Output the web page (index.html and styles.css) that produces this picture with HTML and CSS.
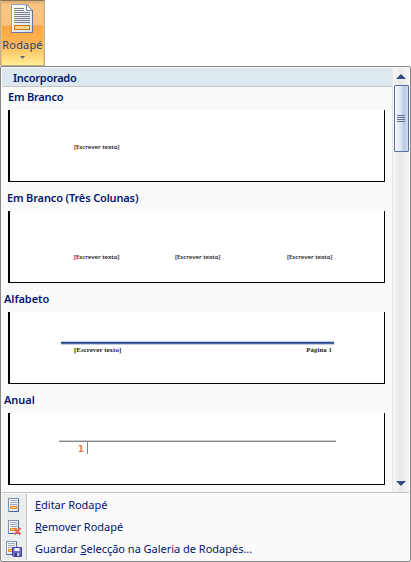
FILE: index.html
```html
<!DOCTYPE html>
<html lang="pt">
<head>
<meta charset="utf-8">
<title>Rodapé</title>
<link rel="stylesheet" href="styles.css">
</head>
<body>
<svg width="0" height="0" class="defs" aria-hidden="true">
  <defs>
    <linearGradient id="sheet" x2="1" y2="1"><stop stop-color="#fff"/><stop offset="1" stop-color="#d3e1f2"/></linearGradient>
    <g id="page">
      <rect x=".5" y=".5" width="10" height="13" fill="url(#sheet)" stroke="#8293b0"/>
      <path d="M10.500 1v12.500H1" fill="none" stroke="#53678c"/>
      <path d="M2 2.500h7M2 4.500h7M2 6.500h7" stroke="#a4adbd"/>
      <rect x="2.500" y="8.500" width="6" height="2" fill="#ffd27d" stroke="#e48a22"/>
    </g>
  </defs>
</svg>
<button class="ribbon-button">
  <svg width="23" height="30" viewBox="0 0 23 30">
    <path d="M.5.5h15l6 6v22H.5z" fill="url(#sheet)" stroke="#8ba0c2"/>
    <path d="M15.500.5v6h6z" fill="#fff" stroke="#7185a8"/>
    <path d="M21.500 6v22.500H.5" fill="none" stroke="#5f779f"/>
    <path d="M3 4.500h10M3 6.500h10M3 8.500h16M3 10.500h16M3 12.500h16M3 14.500h16M3 16.500h16M3 18.500h16" stroke="#7c7f84"/>
    <rect x="3.500" y="21.500" width="15" height="4" fill="#ffd58b" stroke="#c8761b"/>
  </svg>
  <span class="button-label">Rodapé</span>
  <svg class="caret" width="5" height="3"><path d="M0 0h5L2.500 3z" fill="#4c699f"/></svg>
</button>
<main class="menu">
  <div class="gallery">
    <div class="gallery-content">
      <h1>Incorporado</h1>
      <section class="item blank">
        <h2>Em Branco</h2>
        <div class="preview"><span>[Escrever texto]</span></div>
      </section>
      <section class="item columns">
        <h2>Em Branco (Três Colunas)</h2>
        <div class="preview"><span>[Escrever texto]</span><span>[Escrever texto]</span><span>[Escrever texto]</span></div>
      </section>
      <section class="item alphabet">
        <h2>Alfabeto</h2>
        <div class="preview"><div class="rule"></div><div class="words"><span class="entry">[Escrever texto]</span><span class="folio">Página 1</span></div></div>
      </section>
      <section class="item annual">
        <h2>Anual</h2>
        <div class="preview"><div class="rule"></div><div class="number">1</div></div>
      </section>
    </div>
    <div class="scrollbar">
      <svg class="up" width="10" height="5"><path d="M0 5L5 0l5 5z" fill="#354a7e"/></svg>
      <div class="thumb"><i></i><i></i><i></i><i></i></div>
      <svg class="down" width="10" height="5"><path d="M0 0h10L5 5z" fill="#354a7e"/></svg>
    </div>
  </div>
  <nav class="commands">
    <a><span class="icon"><svg width="18" height="17"><use href="#page" x="3" y="1"/></svg></span><span class="edit"><u>E</u>ditar Rodapé</span></a>
    <a><span class="icon"><svg width="18" height="17"><use href="#page" x="3" y="1"/><path d="M9.500 9.500l6 6M15.500 9l-6 6.500" stroke="#f0654b" stroke-width="2"/></svg></span><span class="remove"><u>R</u>emover Rodapé</span></a>
    <a><span class="icon"><svg width="18" height="17"><use href="#page" x="1" y="0"/><path d="M7.500 6.500h9v9h-8l-1-1z" fill="#6868c8" stroke="#4545a0"/><path d="M9.500 7h5v3h-5z" fill="#eef2ff"/><path d="M10 12h4v3h-4z" fill="#c5cdf0"/><path d="M10 12h2v3h-2z" fill="#353575"/></svg></span><span class="save">Guardar <u>S</u>elecção na Galeria de Rodapés...</span></a>
  </nav>
</main>
</body>
</html>
```
FILE: styles.css
```css
* { box-sizing: border-box; }
body {
  margin: 0;
  width: 411px;
  height: 562px;
  overflow: hidden;
  background: #fff;
  color: #00156e;
  font: 11px/14px "Noto Sans", "Open Sans", sans-serif;
}
.defs { position: absolute; }
.ribbon-button {
  display: flex;
  flex-direction: column;
  align-items: center;
  width: 45px;
  height: 66px;
  padding: 3px 0 0;
  border: 1px solid #c2b08c;
  border-top: 1px solid #8d7656;
  background: linear-gradient(#dcaa72 0, #fbc583 4px, #fdc080 24px, #fda53f 25px, #fdb552 42px, #ffec92 63px);
  box-shadow: inset 1px 0 #edc073, inset -1px 0 #edc073;
  color: #244079;
  font: inherit;
}
.ribbon-button svg { flex: none; }
.button-label { height: 14px; margin-top: 4px; letter-spacing: .15px; white-space: nowrap; }
.ribbon-button .caret { margin-top: 4px; }
.menu {
  width: 411px;
  height: 496px;
  padding: 1px;
  border: 1px solid #868686;
  border-radius: 2px;
  background: #fafafa;
}
.gallery { display: flex; height: 425px; border-bottom: 1px solid #c5c5c5; }
.gallery-content { width: 390px; }
h1, h2 { margin: 0; font-size: 11px; font-weight: 600; white-space: nowrap; }
h1 { height: 19px; padding: 3px 0 0 11px; border-bottom: 1px solid #c5c5c5; background: #dde7ee; letter-spacing: -.28px; }
.item { height: 101px; }
h2 { height: 23px; padding: 2px 0 0 6px; line-height: 15px; letter-spacing: -.2px; }
.columns h2 { padding-left: 5px; letter-spacing: -.15px; }
.alphabet h2, .annual h2 { padding-left: 2px; letter-spacing: -.05px; }
.preview {
  width: 377px;
  height: 72px;
  margin-left: 6px;
  border: solid #000;
  border-width: 0 1px 1px 2px;
  background: #fff;
  color: #222;
  font: 600 6px/8px "Noto Sans", sans-serif;
  white-space: nowrap;
}
.preview span { display: block; }
.blank .preview { padding: 33px 0 0 64px; }
.columns .preview { display: grid; grid-template-columns: 101px 112px auto; padding: 42px 0 0 64px; }
.alphabet .preview { padding: 29px 50px 0 51px; }
.alphabet .rule { height: 4px; border: solid #c2cce2; border-width: 1px 0; background: linear-gradient(#234a8c 50%, #4869a1 50%); }
.words { display: flex; justify-content: space-between; padding: 1px 2px 0 13px; font: 600 6.8px/8px "Liberation Serif", serif; letter-spacing: .08px; }
.annual .preview { padding: 27px 48px 0 49px; }
.annual .rule { height: 2px; border-top: 1px solid #cfcfcf; background: #858585; }
.number { width: 29px; height: 12px; padding: 1px 3px 0 0; border-right: 1px solid #858585; color: #e27c3e; text-align: right; font: bold 8.5px/12px "DejaVu Sans", sans-serif; }
.scrollbar {
  display: flex;
  flex-direction: column;
  align-items: center;
  width: 17px;
  padding: 6px 0;
  border-left: 1px solid #e3e8e9;
  background: linear-gradient(90deg, #f8f8f8, #e9e9e9 7px, #f3f3f3);
}
.thumb {
  display: flex;
  flex-direction: column;
  align-items: center;
  justify-content: center;
  gap: 1px;
  width: 15px;
  height: 67px;
  margin-top: 6px;
  border: 1px solid #58709e;
  border-radius: 1px;
  background: linear-gradient(90deg, #f8fbff, #dbe4f4 6px, #b8c9e4 9px, #d1dded);
}
.thumb i { width: 8px; height: 1px; background: #66728a; }
.down { margin-top: auto; }
.commands { height: 67px; padding-top: 1px; }
.commands a { display: flex; align-items: center; height: 22px; }
.icon { display: flex; align-items: center; justify-content: center; width: 25px; height: 22px; margin-right: 8px; border-right: 1px solid #c5c5c5; background: #e9eeee; }
.commands a > span:last-child { white-space: nowrap; letter-spacing: -.02px; }
u { text-underline-offset: 1px; text-decoration-thickness: 1px; }
```
